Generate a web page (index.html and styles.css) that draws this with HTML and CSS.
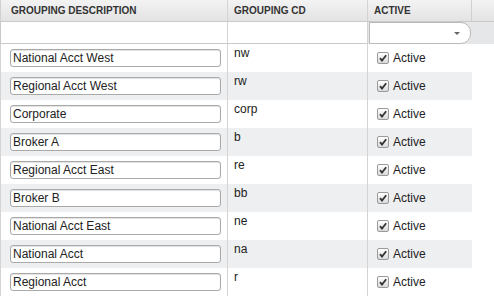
FILE: index.html
```html
<!DOCTYPE html>
<html>
<head>
<meta charset="utf-8">
<link rel="stylesheet" href="styles.css">
</head>
<body>
<div class="grid">
  <div class="row head">
    <div class="cell c1">GROUPING DESCRIPTION</div>
    <div class="cell c2">GROUPING CD</div>
    <div class="cell c3">ACTIVE</div>
    <div class="filler"></div>
  </div>
  <div class="row filter">
    <div class="cell c1"></div>
    <div class="cell c2"></div>
    <div class="cell c3"><div class="select"><span class="arrow"></span></div></div>
    <div class="filler"></div>
  </div>
  <div class="body">
    <div class="row data"><div class="cell c1"><div class="tin">National Acct West</div></div><div class="cell c2">nw</div><div class="cell c3"><span class="cb"><svg viewBox="0 0 12 12" width="12" height="12"><path d="M3 6.2 L5 8.6 L9.2 3.2" fill="none" stroke="#333" stroke-width="1.8"/></svg></span>Active</div></div>
    <div class="row data alt"><div class="cell c1"><div class="tin">Regional Acct West</div></div><div class="cell c2">rw</div><div class="cell c3"><span class="cb"><svg viewBox="0 0 12 12" width="12" height="12"><path d="M3 6.2 L5 8.6 L9.2 3.2" fill="none" stroke="#333" stroke-width="1.8"/></svg></span>Active</div></div>
    <div class="row data"><div class="cell c1"><div class="tin">Corporate</div></div><div class="cell c2">corp</div><div class="cell c3"><span class="cb"><svg viewBox="0 0 12 12" width="12" height="12"><path d="M3 6.2 L5 8.6 L9.2 3.2" fill="none" stroke="#333" stroke-width="1.8"/></svg></span>Active</div></div>
    <div class="row data alt"><div class="cell c1"><div class="tin">Broker A</div></div><div class="cell c2">b</div><div class="cell c3"><span class="cb"><svg viewBox="0 0 12 12" width="12" height="12"><path d="M3 6.2 L5 8.6 L9.2 3.2" fill="none" stroke="#333" stroke-width="1.8"/></svg></span>Active</div></div>
    <div class="row data"><div class="cell c1"><div class="tin">Regional Acct East</div></div><div class="cell c2">re</div><div class="cell c3"><span class="cb"><svg viewBox="0 0 12 12" width="12" height="12"><path d="M3 6.2 L5 8.6 L9.2 3.2" fill="none" stroke="#333" stroke-width="1.8"/></svg></span>Active</div></div>
    <div class="row data alt"><div class="cell c1"><div class="tin">Broker B</div></div><div class="cell c2">bb</div><div class="cell c3"><span class="cb"><svg viewBox="0 0 12 12" width="12" height="12"><path d="M3 6.2 L5 8.6 L9.2 3.2" fill="none" stroke="#333" stroke-width="1.8"/></svg></span>Active</div></div>
    <div class="row data"><div class="cell c1"><div class="tin">National Acct East</div></div><div class="cell c2">ne</div><div class="cell c3"><span class="cb"><svg viewBox="0 0 12 12" width="12" height="12"><path d="M3 6.2 L5 8.6 L9.2 3.2" fill="none" stroke="#333" stroke-width="1.8"/></svg></span>Active</div></div>
    <div class="row data alt"><div class="cell c1"><div class="tin">National Acct</div></div><div class="cell c2">na</div><div class="cell c3"><span class="cb"><svg viewBox="0 0 12 12" width="12" height="12"><path d="M3 6.2 L5 8.6 L9.2 3.2" fill="none" stroke="#333" stroke-width="1.8"/></svg></span>Active</div></div>
    <div class="row data"><div class="cell c1"><div class="tin">Regional Acct</div></div><div class="cell c2">r</div><div class="cell c3"><span class="cb"><svg viewBox="0 0 12 12" width="12" height="12"><path d="M3 6.2 L5 8.6 L9.2 3.2" fill="none" stroke="#333" stroke-width="1.8"/></svg></span>Active</div></div>
  </div>
</div>
</body>
</html>
```

FILE: styles.css
```css
html, body {
  margin: 0;
  padding: 0;
  background: #ffffff;
}

.grid {
  width: 494px;
  font-family: "Liberation Sans", Arial, sans-serif;
  font-size: 12px;
  color: #222;
}

.row {
  display: flex;
}

.cell {
  box-sizing: border-box;
}

.c1 { width: 227px; border-right: 1px solid #d4d4d4; }
.c2 { width: 140px; border-right: 1px solid #d4d4d4; }
.c3 { width: 104px; }

.head {
  height: 22px;
  background: linear-gradient(#f3f3f3, #e3e3e3);
  border-bottom: 1px solid #c9c9c9;
  box-sizing: border-box;
  border-left: 1px solid #d0d0d0;
}

.head .cell {
  font-weight: bold;
  font-size: 10px;
  line-height: 21px;
  color: #333;
  padding-left: 6px;
}

.head .c1 { padding-left: 10px; }
.head .c3 { border-right: 1px solid #d0d0d0; }

.filler {
  flex: 1;
}

.filter {
  height: 22px;
  background: #e6e7e8;
  border-left: 1px solid #c9c9c9;
}

.filter .c1, .filter .c2 {
  background: #fff;
  border-bottom: 1px solid #c9c9c9;
}

.filter .c3 {
  padding-left: 1px;
}

.select {
  box-sizing: border-box;
  height: 22px;
  width: 102px;
  background: #fff;
  border: 1px solid #b9b9b9;
  border-radius: 0 10px 10px 0;
  position: relative;
}

.arrow {
  position: absolute;
  right: 10px;
  top: 9px;
  width: 0;
  height: 0;
  border-left: 3px solid transparent;
  border-right: 3px solid transparent;
  border-top: 3px solid #666;
}

.body {
  width: 472px;
}

.data {
  height: 28px;
  border-left: 1px solid #d4d4d4;
  box-sizing: border-box;
}

.data.alt {
  background: #eeeff1;
}

.data .c1 {
  display: flex;
  align-items: center;
  padding-left: 9px;
}

.tin {
  box-sizing: border-box;
  width: 211px;
  height: 18px;
  border: 1px solid #a9a9a9;
  border-radius: 3px;
  background: #fff;
  box-shadow: inset 0 1px 1px rgba(0, 0, 0, 0.12);
  padding-left: 2px;
  line-height: 16px;
  color: #222;
}

.data .c2 {
  padding: 2px 0 0 6px;
  line-height: 14px;
}

.data .c3 {
  display: flex;
  align-items: center;
  padding-left: 9px;
}

.cb {
  box-sizing: border-box;
  width: 12px;
  height: 12px;
  border: 1px solid #9a9a9a;
  border-radius: 2px;
  background: linear-gradient(#ffffff, #d9d9d9);
  margin-right: 4px;
  display: flex;
  align-items: center;
  justify-content: center;
  overflow: hidden;
}

.cb svg {
  display: block;
  flex: none;
}
```
